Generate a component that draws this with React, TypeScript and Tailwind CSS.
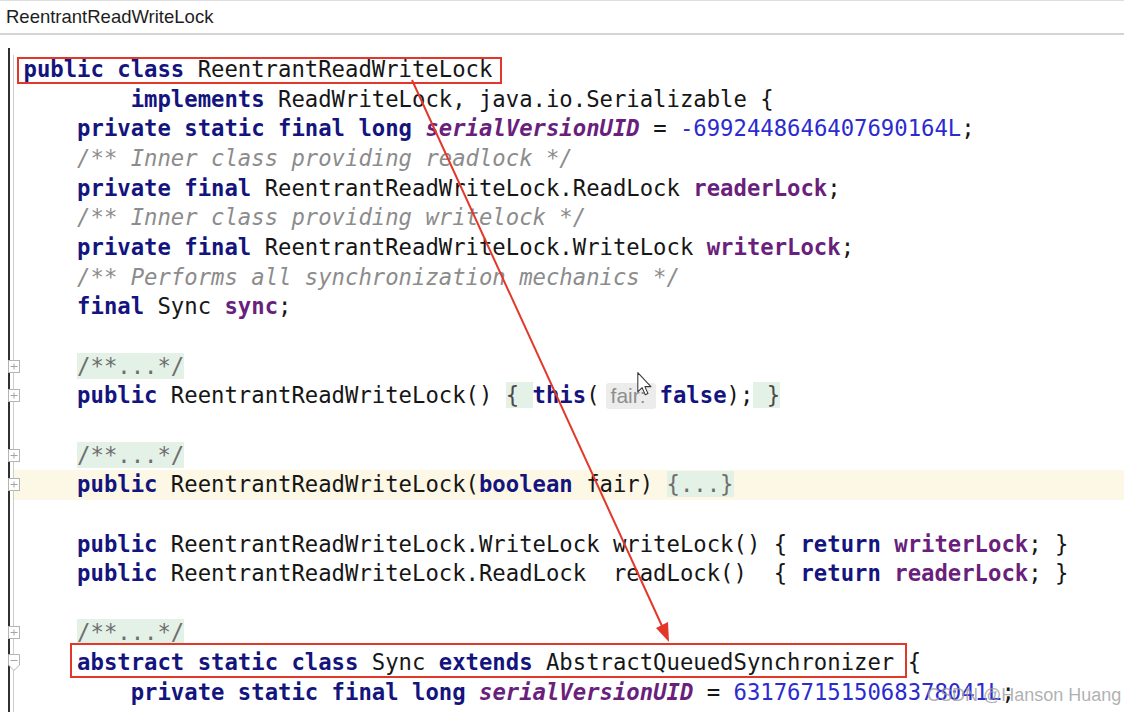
import React from 'react';

type Tok = [string, string];

const styles: Record<string, string> = {
  n: 'text-[#161616]',
  k: 'text-[#14147e] font-bold',
  f: 'text-[#6a1f7c] font-bold',
  fi: 'text-[#6a1f7c] font-bold italic',
  c: 'text-[#8c8c8c] italic',
  num: 'text-[#2b2bd0]',
  fold: 'text-[#6e6e6e] bg-[#e4f1e7]',
  brace: 'text-[#4a4a4a] bg-[#e4f1e7]',
};

const lines: { toks: Tok[]; marker?: 'plus' | 'minus'; active?: boolean }[] = [
  { toks: [['public class', 'k'], [' ReentrantReadWriteLock', 'n']] },
  { toks: [['        ', 'n'], ['implements', 'k'], [' ReadWriteLock, java.io.Serializable {', 'n']] },
  {
    toks: [
      ['    ', 'n'],
      ['private static final long', 'k'],
      [' ', 'n'],
      ['serialVersionUID', 'fi'],
      [' = ', 'n'],
      ['-6992448646407690164L', 'num'],
      [';', 'n'],
    ],
  },
  { toks: [['    ', 'n'], ['/** Inner class providing readlock */', 'c']] },
  { toks: [['    ', 'n'], ['private final', 'k'], [' ReentrantReadWriteLock.ReadLock ', 'n'], ['readerLock', 'f'], [';', 'n']] },
  { toks: [['    ', 'n'], ['/** Inner class providing writelock */', 'c']] },
  { toks: [['    ', 'n'], ['private final', 'k'], [' ReentrantReadWriteLock.WriteLock ', 'n'], ['writerLock', 'f'], [';', 'n']] },
  { toks: [['    ', 'n'], ['/** Performs all synchronization mechanics */', 'c']] },
  { toks: [['    ', 'n'], ['final', 'k'], [' Sync ', 'n'], ['sync', 'f'], [';', 'n']] },
  { toks: [] },
  { toks: [['    ', 'n'], ['/**...*/', 'fold']], marker: 'plus' },
  {
    toks: [
      ['    ', 'n'],
      ['public', 'k'],
      [' ReentrantReadWriteLock() ', 'n'],
      ['{ ', 'brace'],
      ['this', 'k'],
      ['(', 'n'],
      ['fair:', 'hint'],
      ['false', 'k'],
      [');', 'n'],
      [' }', 'brace'],
    ],
    marker: 'plus',
  },
  { toks: [] },
  { toks: [['    ', 'n'], ['/**...*/', 'fold']], marker: 'plus' },
  {
    toks: [['    ', 'n'], ['public', 'k'], [' ReentrantReadWriteLock(', 'n'], ['boolean', 'k'], [' fair) ', 'n'], ['{...}', 'fold']],
    marker: 'plus',
    active: true,
  },
  { toks: [] },
  {
    toks: [
      ['    ', 'n'],
      ['public', 'k'],
      [' ReentrantReadWriteLock.WriteLock writeLock() { ', 'n'],
      ['return', 'k'],
      [' ', 'n'],
      ['writerLock', 'f'],
      ['; }', 'n'],
    ],
  },
  {
    toks: [
      ['    ', 'n'],
      ['public', 'k'],
      [' ReentrantReadWriteLock.ReadLock  readLock()  { ', 'n'],
      ['return', 'k'],
      [' ', 'n'],
      ['readerLock', 'f'],
      ['; }', 'n'],
    ],
  },
  { toks: [] },
  { toks: [['    ', 'n'], ['/**...*/', 'fold']], marker: 'plus' },
  {
    toks: [['    ', 'n'], ['abstract static class', 'k'], [' Sync ', 'n'], ['extends', 'k'], [' AbstractQueuedSynchronizer {', 'n']],
    marker: 'minus',
  },
  {
    toks: [
      ['        ', 'n'],
      ['private static final long', 'k'],
      [' ', 'n'],
      ['serialVersionUID', 'fi'],
      [' = ', 'n'],
      ['6317671515068378041L', 'num'],
      [';', 'n'],
    ],
  },
];

const FoldMarker = ({ kind }: { kind: 'plus' | 'minus' }) =>
  kind === 'plus' ? (
    <svg width="12" height="13" viewBox="0 0 12 13" className="absolute left-[-6px] top-[8px] z-10">
      <rect x="0.5" y="0.5" width="11" height="12" fill="#ffffff" stroke="#b4b4b4" />
      <path d="M2.5 6.5h7M6 3.5v6" stroke="#a4a4a4" strokeWidth="1" />
    </svg>
  ) : (
    <svg width="12" height="17" viewBox="0 0 12 17" className="absolute left-[-6px] top-[6px] z-10">
      <path d="M0.5 0.5h11v10.5l-5.5 5.5l-5.5-5.5z" fill="#ffffff" stroke="#b4b4b4" />
      <path d="M2.5 6.5h7" stroke="#a4a4a4" strokeWidth="1" />
    </svg>
  );

const Cursor = () => (
  <svg width="16" height="24" viewBox="0 0 13 20" className="absolute left-[637px] top-[372px] z-30">
    <path d="M0.5 0.5v16l3.6-3.5l2.6 6l2.3-1l-2.6-5.8h5z" fill="#ffffff" stroke="#3a3a3a" strokeWidth="0.9" strokeLinejoin="round" />
  </svg>
);

export default function App() {
  return (
    <div className="relative w-[1124px] h-[712px] overflow-hidden bg-white flex flex-col font-['DejaVu_Sans_Mono',monospace]">
      {/* editor tab title */}
      <div className="h-[35px] shrink-0 border-t border-[#dedede] border-b-2 border-b-[#d4d4d4] flex items-center px-[6px] font-['Liberation_Sans',Arial,sans-serif] text-[18.5px] text-[#1e1e1e]">
        ReentrantReadWriteLock
      </div>

      {/* editor body */}
      <div className="flex-1 flex flex-col pt-[13px]">
        <div className="flex-1 ml-[8px] border-l-2 border-[#2f2f2f] pt-[7px]">
          <div className="h-full ml-[3px] border-l border-[#cdcdcd]">
            {lines.map((line, i) => (
              <div
                key={i}
                className={`relative h-[29.67px] leading-[29.67px] pl-[9.5px] whitespace-pre text-[22.25px] ${
                  line.active ? 'bg-[#fdf8e5]' : ''
                }`}
              >
                {line.marker && <FoldMarker kind={line.marker} />}
                {line.toks.map(([t, s], j) =>
                  s === 'hint' ? (
                    <span
                      key={j}
                      className="inline-block align-top mt-[2px] ml-[6px] mr-[4px] w-[50px] h-[26px] leading-[26px] pl-[5px] rounded-[3px] bg-[#ececec] text-[#8e8e8e] text-[21px] font-['Liberation_Sans',Arial,sans-serif]"
                    >
                      {t}
                    </span>
                  ) : (
                    <span key={j} className={styles[s]}>
                      {t}
                    </span>
                  )
                )}
              </div>
            ))}
          </div>
        </div>
      </div>

      {/* annotations drawn over the code */}
      <div className="absolute left-[17px] top-[57px] w-[485px] h-[27px] border-2 border-[#e3372a] z-20" />
      <div className="absolute left-[70px] top-[643px] w-[837px] h-[35px] border-2 border-[#e3372a] z-20" />
      <svg width="1124" height="712" viewBox="0 0 1124 712" className="absolute left-0 top-0 z-20 pointer-events-none">
        <line x1="412" y1="80" x2="662" y2="626" stroke="#e3372a" strokeWidth="2" />
        <polygon points="669,642 656,628 668,622" fill="#e3372a" />
      </svg>
      <Cursor />

      <div className="absolute left-[927px] top-[682px] z-30 font-['Liberation_Sans',Arial,sans-serif] text-[18px] text-[#9c9c9c]/80">
        CSDN @Hanson Huang
      </div>
    </div>
  );
}
